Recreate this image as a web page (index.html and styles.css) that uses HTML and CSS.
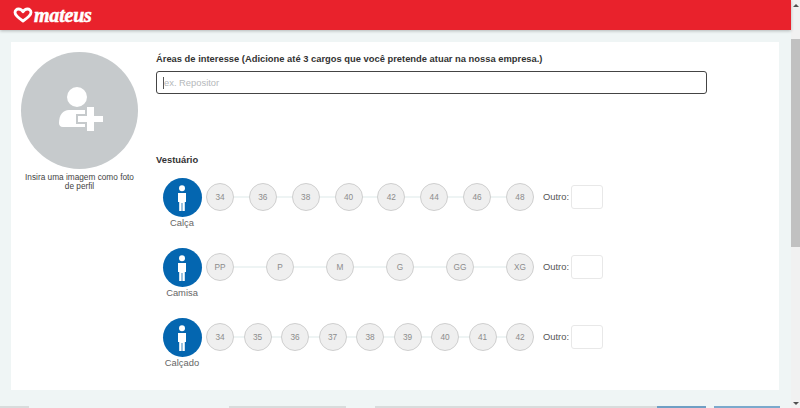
FILE: index.html
```html
<!DOCTYPE html>
<html lang="pt-BR">
<head>
<meta charset="utf-8">
<title>Mateus</title>
<link rel="stylesheet" href="styles.css">
</head>
<body>
<div class="page">
  <header class="header">
    <svg class="heart" viewBox="0 0 20 16"><path d="M10 14C5.500 11 2 8.600 2 5.500 2 3.400 3.600 2 5.500 2 7.400 2 9 3 10 4.800 11 3 12.600 2 14.500 2 16.400 2 18 3.400 18 5.500c0 3.100-3.500 5.500-8 8.500z" fill="none" stroke="#fff" stroke-width="2.800" stroke-linejoin="round"/></svg>
    <span class="brand">mateus</span>
  </header>
  <main class="content">
    <section class="card">
      <aside class="avatar-col">
        <div class="avatar">
          <svg class="avatar-icon" viewBox="0 0 44 44"><circle cx="18" cy="10" r="10" fill="#fff"/><path d="M0 36c0-8 4-13 10-13h16c3 0 2 17 0 17H4c-3 0-4-2-4-4z" fill="#fff"/><path class="plus-halo" d="M19 29h9v-9h7v9h9v6h-9v9h-7v-9h-9z"/><path d="M19 29h9v-9h7v9h9v6h-9v9h-7v-9h-9z" fill="#fff"/></svg>
        </div>
        <p class="avatar-caption">Insira uma imagem como foto de perfil</p>
      </aside>
      <div class="form">
        <h2 class="title">Áreas de interesse (Adicione até 3 cargos que você pretende atuar na nossa empresa.)</h2>
        <div class="search"><span class="caret"></span><span class="placeholder">ex. Repositor</span></div>
        <h2 class="title clothing">Vestuário</h2>

        <div class="row">
          <div class="kind">
            <span class="badge"><svg class="person" viewBox="0 0 12 26"><circle cx="6" cy="3.200" r="3" fill="#fff"/><path d="M2 8h8v9H8.800v9H6.400v-8h-.8v8H3.200v-9H2z" fill="#fff"/></svg></span>
            <span class="kind-label">Calça</span>
          </div>
          <div class="track">
            <span class="size">34</span><span class="size">36</span><span class="size">38</span><span class="size">40</span><span class="size">42</span><span class="size">44</span><span class="size">46</span><span class="size">48</span>
          </div>
          <label class="other">Outro:<span class="other-box"></span></label>
        </div>

        <div class="row">
          <div class="kind">
            <span class="badge"><svg class="person" viewBox="0 0 12 26"><circle cx="6" cy="3.200" r="3" fill="#fff"/><path d="M2 8h8v9H8.800v9H6.400v-8h-.8v8H3.200v-9H2z" fill="#fff"/></svg></span>
            <span class="kind-label">Camisa</span>
          </div>
          <div class="track">
            <span class="size">PP</span><span class="size">P</span><span class="size">M</span><span class="size">G</span><span class="size">GG</span><span class="size">XG</span>
          </div>
          <label class="other">Outro:<span class="other-box"></span></label>
        </div>

        <div class="row">
          <div class="kind">
            <span class="badge"><svg class="person" viewBox="0 0 12 26"><circle cx="6" cy="3.200" r="3" fill="#fff"/><path d="M2 8h8v9H8.800v9H6.400v-8h-.8v8H3.200v-9H2z" fill="#fff"/></svg></span>
            <span class="kind-label">Calçado</span>
          </div>
          <div class="track">
            <span class="size">34</span><span class="size">35</span><span class="size">36</span><span class="size">37</span><span class="size">38</span><span class="size">39</span><span class="size">40</span><span class="size">41</span><span class="size">42</span>
          </div>
          <label class="other">Outro:<span class="other-box"></span></label>
        </div>
      </div>
    </section>
    <div class="bottom-strip">
      <span class="edge edge-a"></span>
      <span class="edge edge-d"></span>
      <span class="edge edge-e"></span>
      <span class="edge edge-b"></span>
      <span class="edge edge-c"></span>
    </div>
  </main>
  <div class="scrollbar">
    <span class="arrow-up"></span>
    <span class="thumb"></span>
    <span class="arrow-down"></span>
  </div>
</div>
</body>
</html>
```
FILE: styles.css
```css
* { box-sizing: border-box; }
html, body { margin: 0; height: 100%; overflow: hidden; }
body { font-family: "Liberation Sans", Arial, sans-serif; background: #eff5f5; color: #333; }
.page { display: grid; grid-template-columns: 791px 9px; grid-template-rows: 30px 378px; height: 408px; }
.header { grid-column: 1; grid-row: 1; background: #e9222c; display: flex; align-items: center; padding-left: 13px; gap: 1px; box-shadow: 0 1px 3px rgba(0,0,0,.25); z-index: 1; }
.heart { width: 20px; height: 16px; }
.brand { font-family: "Liberation Serif", serif; font-weight: 700; font-style: italic; font-size: 20px; letter-spacing: -0.2px; color: #fff; line-height: 1; -webkit-text-stroke: 0.5px #fff; }
.content { grid-column: 1; grid-row: 2; padding: 12px 12px 0 11px; display: flex; flex-direction: column; }
.card { background: #fff; height: 348px; display: flex; padding: 10px 0 0 10px; }
.avatar-col { width: 117px; margin-right: 18px; flex: none; display: flex; flex-direction: column; align-items: center; }
.avatar { width: 117px; height: 117px; border-radius: 50%; background: #c6cacc; display: flex; align-items: center; justify-content: center; }
.avatar-icon { width: 44px; height: 44px; margin-left: 3px; margin-top: -3px; overflow: visible; }
.plus-halo { fill: #c6cacc; stroke: #c6cacc; stroke-width: 4px; }
.avatar-caption { margin: 4px 0 0; width: 117px; font-size: 8.270px; line-height: 9px; text-align: center; color: #444; }
.form { width: 551px; flex: none; }
.title { margin: 0; font-size: 9.370px; line-height: 14px; font-weight: 700; color: #333; }
.search { margin-top: 5px; height: 23px; border: 1px solid #444; border-radius: 3px; display: flex; align-items: center; padding-left: 6px; }
.caret { width: 1px; height: 12px; background: #555; }
.placeholder { font-size: 9.370px; color: #b5b8ba; }
.clothing { margin-top: 59px; margin-bottom: 11px; }
.row { display: flex; align-items: flex-start; margin-left: 7px; height: 70px; }
.kind { width: 38px; display: flex; flex-direction: column; align-items: center; flex: none; }
.badge { width: 39px; height: 39px; flex: none; border-radius: 50%; background: #0466b0; display: flex; align-items: center; justify-content: center; }
.person { width: 12px; height: 26px; }
.kind-label { margin-top: 0; font-size: 9.370px; line-height: 12px; color: #666; white-space: nowrap; }
.track { margin: 5px 0 0 5px; width: 328px; height: 28px; flex: none; display: flex; justify-content: space-between; background: linear-gradient(#eef4f4, #eef4f4) center / 100% 2px no-repeat; }
.size { width: 28px; height: 28px; border-radius: 50%; border: 1px solid #cfcfcf; background: #efefef; color: #8c8c8c; font-size: 8.270px; display: flex; align-items: center; justify-content: center; }
.other { display: flex; align-items: center; margin: 7px 0 0 9px; font-size: 9.370px; color: #555; height: 24px; }
.other-box { width: 32px; height: 24px; margin-left: 2px; border: 1px solid #e8e8e8; border-radius: 3px; background: #fff; }
.bottom-strip { position: relative; flex: 1; }
.edge { position: absolute; bottom: 0; height: 2px; }
.edge-a { left: -11px; width: 29px; background: #d8dcdc; }
.edge-d { left: 218px; width: 117px; background: #d8dcdc; }
.edge-e { left: 364px; width: 282px; background: #d8dcdc; }
.edge-b { left: 646px; width: 49px; background: #6f9fc4; }
.edge-c { left: 703px; width: 66px; background: #7ba9cc; }
.scrollbar { grid-column: 2; grid-row: 1 / 3; background: #f1f1f1; display: flex; flex-direction: column; align-items: center; }
.arrow-up { margin-top: 4px; width: 0; height: 0; border: 3px solid transparent; border-top: 0; border-bottom-color: #505050; }
.thumb { margin-top: 32px; width: 9px; height: 208px; background: #c1c1c1; }
.arrow-down { margin-top: auto; margin-bottom: 3px; width: 0; height: 0; border: 3px solid transparent; border-bottom: 0; border-top-color: #505050; }
```
